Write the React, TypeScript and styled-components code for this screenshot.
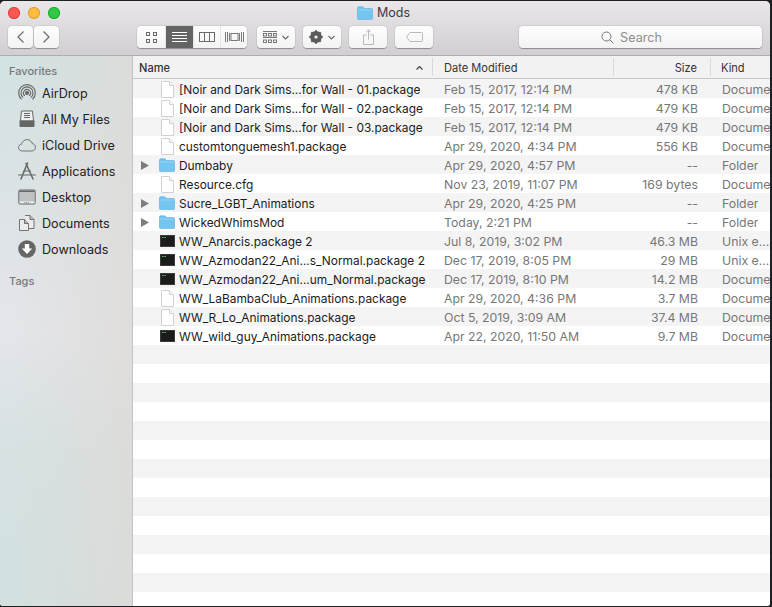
import React from 'react'
import styled, { createGlobalStyle } from 'styled-components'

const Global = createGlobalStyle`
  html, body {
    margin: 0;
    padding: 0;
    height: 100%;
    background: #1e2023;
    overflow: hidden;
  }
  * { box-sizing: border-box; }
`

const Win = styled.div`
  margin-top: 1px;
  width: 770px;
  height: 605px;
  border-radius: 5px 5px 3px 3px;
  overflow: hidden;
  display: flex;
  flex-direction: column;
  font-family: Inter, "Liberation Sans", sans-serif;
  background: #fff;
`

const Toolbar = styled.header`
  height: 55px;
  flex: none;
  display: flex;
  flex-direction: column;
  background: linear-gradient(#e9e7e9, #d1cfd1);
  border-bottom: 1px solid #aeacae;
`

const TitleRow = styled.div`
  height: 25px;
  flex: none;
  display: flex;
  align-items: center;
  padding: 0 0 2px 8px;
`

const Lights = styled.div`
  display: flex;
  gap: 8px;
  width: 349px;
`

const Light = styled.span<{ $c: string; $b: string }>`
  width: 12px;
  height: 12px;
  border-radius: 50%;
  background: ${p => p.$c};
  box-shadow: inset 0 0 0 1px ${p => p.$b};
`

const Title = styled.div`
  display: flex;
  align-items: center;
  gap: 4px;
  font-size: 12.5px;
  color: #3c3c3c;
`

const ControlRow = styled.div`
  display: flex;
  align-items: flex-start;
  padding-left: 8px;
`

const Btn = styled.div<{ $w: number; $ml?: number; $dim?: boolean }>`
  width: ${p => p.$w}px;
  height: 22px;
  margin-left: ${p => p.$ml ?? 0}px;
  display: flex;
  align-items: center;
  justify-content: center;
  gap: 5px;
  background: linear-gradient(#fdfdfd, #f3f3f3);
  border-radius: 4px;
  box-shadow: 0 0.5px 1px rgba(0, 0, 0, 0.3), 0 0 0 0.5px rgba(0, 0, 0, 0.08);
  color: ${p => (p.$dim ? '#b9b9b9' : '#6a6a6a')};
`

const Group = styled.div`
  display: flex;
  height: 22px;
  margin-left: 78px;
  border-radius: 4px;
  overflow: hidden;
  box-shadow: 0 0.5px 1px rgba(0, 0, 0, 0.3), 0 0 0 0.5px rgba(0, 0, 0, 0.08);
`

const Seg = styled.div<{ $w: number; $on?: boolean }>`
  width: ${p => p.$w}px;
  display: flex;
  align-items: center;
  justify-content: center;
  color: ${p => (p.$on ? '#fff' : '#6a6a6a')};
  background: ${p => (p.$on ? '#646464' : 'linear-gradient(#fdfdfd, #f3f3f3)')};
  & + & { border-left: 1px solid #e6e6e6; }
`

const SearchBox = styled(Btn)`
  color: #8e8e8e;
  font-size: 12.6px;
  gap: 6px;
  padding-right: 18px;
`

const Body = styled.div`
  flex: 1;
  min-height: 0;
  display: flex;
`

const Sidebar = styled.aside`
  width: 133px;
  flex: none;
  padding: 8px 0 0 0;
  background:
    linear-gradient(to right, rgba(226, 222, 218, 0) 10%, rgba(222, 218, 214, 0.7) 100%),
    linear-gradient(#d2e2e2 0%, #dde3e6 28%, #e4e6ea 50%, #d6e1e2 72%, #d2e0e0 100%);
  border-right: 1px solid #c3c3c3;
`

const SideHead = styled.div<{ $mt?: number }>`
  margin: ${p => p.$mt ?? 0}px 0 0 9px;
  height: 14px;
  line-height: 14px;
  font-size: 11px;
  font-weight: 500;
  color: #77797a;
`

const SideList = styled.div`
  margin-top: 2px;
`

const SideItem = styled.div`
  height: 26px;
  display: flex;
  align-items: center;
  padding-left: 18px;
  gap: 6px;
  font-size: 12.6px;
  color: #222;
`

const SideIcon = styled.svg`
  width: 18px;
  height: 18px;
  flex: none;
  color: #666;
`

const Main = styled.main`
  flex: 1;
  min-width: 0;
  display: flex;
  flex-direction: column;
  overflow: hidden;
`

const HeaderRow = styled.div`
  height: 23px;
  flex: none;
  display: flex;
  align-items: center;
  background: #f2f2f2;
  border-bottom: 1px solid #c6c6c6;
  font-size: 11.1px;
  color: #333;
`

const HeadCell = styled.div<{ $w: number; $right?: boolean; $pl: number; $pr?: number; $line?: boolean }>`
  width: ${p => p.$w}px;
  height: 18px;
  flex: none;
  display: flex;
  align-items: center;
  justify-content: ${p => (p.$right ? 'flex-end' : 'space-between')};
  padding: 1px ${p => p.$pr ?? 0}px 0 ${p => p.$pl}px;
  border-right: ${p => (p.$line ? '1px solid #d9d9d9' : 'none')};
`

const HeadName = styled.span`
  font-weight: 500;
`

const Rows = styled.div`
  flex: 1;
  overflow: hidden;
`

const Row = styled.div<{ $alt: boolean }>`
  height: 19px;
  padding-top: 1px;
  display: flex;
  align-items: center;
  font-size: 12.3px;
  background: ${p => (p.$alt ? '#f4f4f4' : '#fff')};
  white-space: nowrap;
`

const NameCell = styled.div`
  width: 300px;
  flex: none;
  display: flex;
  align-items: center;
  color: #1c1c1c;
  font-size: 11.9px;
`

const Caret = styled.span`
  width: 24px;
  flex: none;
  display: flex;
  justify-content: flex-end;
  padding-right: 8px;
  height: 9px;
`

const IconSlot = styled.span`
  width: 20px;
  margin-right: 2px;
  flex: none;
  display: flex;
  justify-content: center;
  align-items: center;
`

const DateCell = styled.div`
  width: 181px;
  flex: none;
  padding-left: 11px;
  color: #777;
`

const SizeCell = styled.div`
  width: 84px;
  flex: none;
  text-align: right;
  color: #777;
`

const KindCell = styled.div`
  padding-left: 24px;
  color: #777;
  overflow: hidden;
`

const Folder = ({ w = 16 }: { w?: number }) => (
  <svg width={w} height={(w * 14) / 16} viewBox="0 0 16 14">
    <path d="M0.5 2.2C0.5 1.3 1 .8 1.8.8h3.4c.7 0 1 .2 1.4.7l.8 1h7c.8 0 1.1.5 1.1 1.2v8.8c0 .7-.4 1.1-1.1 1.1H1.6C.9 13.600.5 13.200.5 12.500z" fill="#74c5f0" stroke="#57aadb" strokeWidth=".6" />
    <rect x="1" y="3.500" width="14" height="1" fill="#93d4f6" />
  </svg>
)

const Doc = () => (
  <svg width="13" height="17" viewBox="0 0 13 17">
    <path d="M.5.500h8l4 4v12H.5z" fill="#fff" stroke="#d2d2d2" />
    <path d="M8.500.500v4h4" fill="#f6f6f6" stroke="#d2d2d2" />
  </svg>
)

const Term = () => (
  <svg width="15" height="12" viewBox="0 0 15 12">
    <rect width="15" height="12" rx="1" fill="#111" />
    <rect x=".5" y=".5" width="14" height="11" rx="1" fill="#1c1c1c" stroke="#555" strokeWidth=".6" />
    <path d="M2 2.500h4" stroke="#5fd07a" strokeWidth="1" strokeDasharray="1 .6" />
  </svg>
)

const Tri = () => (
  <svg width="8" height="9" viewBox="0 0 8 9">
    <path d="M0 0l8 4.500L0 9z" fill="#7d7d7d" />
  </svg>
)

type Kind = 'doc' | 'folder' | 'term'

const files: { name: string; date: string; size: string; kind: string; type: Kind }[] = [
  { name: '[Noir and Dark Sims...for Wall - 01.package', date: 'Feb 15, 2017, 12:14 PM', size: '478 KB', kind: 'Document', type: 'doc' },
  { name: '[Noir and Dark Sims...for Wall - 02.package', date: 'Feb 15, 2017, 12:14 PM', size: '479 KB', kind: 'Document', type: 'doc' },
  { name: '[Noir and Dark Sims...for Wall - 03.package', date: 'Feb 15, 2017, 12:14 PM', size: '479 KB', kind: 'Document', type: 'doc' },
  { name: 'customtonguemesh1.package', date: 'Apr 29, 2020, 4:34 PM', size: '556 KB', kind: 'Document', type: 'doc' },
  { name: 'Dumbaby', date: 'Apr 29, 2020, 4:57 PM', size: '--', kind: 'Folder', type: 'folder' },
  { name: 'Resource.cfg', date: 'Nov 23, 2019, 11:07 PM', size: '169 bytes', kind: 'Document', type: 'doc' },
  { name: 'Sucre_LGBT_Animations', date: 'Apr 29, 2020, 4:25 PM', size: '--', kind: 'Folder', type: 'folder' },
  { name: 'WickedWhimsMod', date: 'Today, 2:21 PM', size: '--', kind: 'Folder', type: 'folder' },
  { name: 'WW_Anarcis.package 2', date: 'Jul 8, 2019, 3:02 PM', size: '46.3 MB', kind: 'Unix e...', type: 'term' },
  { name: 'WW_Azmodan22_Ani...s_Normal.package 2', date: 'Dec 17, 2019, 8:05 PM', size: '29 MB', kind: 'Unix e...', type: 'term' },
  { name: 'WW_Azmodan22_Ani...um_Normal.package', date: 'Dec 17, 2019, 8:10 PM', size: '14.2 MB', kind: 'Document', type: 'term' },
  { name: 'WW_LaBambaClub_Animations.package', date: 'Apr 29, 2020, 4:36 PM', size: '3.7 MB', kind: 'Document', type: 'doc' },
  { name: 'WW_R_Lo_Animations.package', date: 'Oct 5, 2019, 3:09 AM', size: '37.4 MB', kind: 'Document', type: 'doc' },
  { name: 'WW_wild_guy_Animations.package', date: 'Apr 22, 2020, 11:50 AM', size: '9.7 MB', kind: 'Document', type: 'term' },
]

const sideIcons: Record<string, React.ReactNode> = {
  AirDrop: (
    <g fill="none" stroke="currentColor" strokeWidth="1.100" strokeLinecap="round">
      <circle cx="9" cy="9" r="1.500" fill="currentColor" />
      <path d="M6.500 11.500a3.500 3.500 0 1 1 5 0" />
      <path d="M4.800 13.200a6 6 0 1 1 8.400 0" />
      <path d="M3.300 15a8.300 8.300 0 1 1 11.400 0" />
    </g>
  ),
  'All My Files': (
    <g>
      <path d="M3.500 1h11l1 10h-13z" fill="#fff" fillOpacity=".55" stroke="currentColor" />
      <path d="M6 3.500h6M6 5.500h6M6 7.500h6" stroke="currentColor" />
      <path d="M1.500 10.500h15v5.500a1 1 0 0 1-1 1h-13a1 1 0 0 1-1-1z" fill="currentColor" />
    </g>
  ),
  'iCloud Drive': (
    <path d="M4.500 15C2.300 15 .5 13.500.5 11.500c0-1.800 1.300-3.100 3-3.300C4 5.700 6.300 3.600 9.200 3.600c2.600 0 4.600 1.700 5.100 4 1.900.2 3.200 1.800 3.200 3.700 0 2-1.600 3.700-3.700 3.700z" fill="none" stroke="currentColor" strokeWidth=".9" />
  ),
  Applications: (
    <g fill="none" stroke="currentColor" strokeLinecap="round">
      <path d="M9.500 1L3 17" strokeWidth="1.500" />
      <path d="M8 1.500L15 17" strokeWidth="1.500" />
      <path d="M.5 13h17" strokeWidth="1" />
      <path d="M5.500 9h7" strokeWidth="1" />
    </g>
  ),
  Desktop: (
    <g>
      <rect x=".8" y="2" width="16.400" height="14" rx="1.200" fill="#fff" fillOpacity=".5" stroke="currentColor" />
      <rect x="1.300" y="2.500" width="15.400" height="1.500" fill="currentColor" />
      <rect x="1.300" y="4" width="15.400" height="9.500" fill="currentColor" fillOpacity=".35" />
      <path d="M6.500 14.800h5" stroke="currentColor" strokeWidth="1" strokeDasharray="1 .7" />
    </g>
  ),
  Documents: (
    <g fill="#ececec" stroke="currentColor" strokeWidth=".9">
      <path d="M7 1.500h5l4 4v9h-6" />
      <path d="M12 1.500v4h4" fill="#bbb" />
      <path d="M1.500 5.500h5l4 4v7h-9z" />
      <path d="M6.500 5.500v4h4" fill="#bbb" />
    </g>
  ),
  Downloads: (
    <g>
      <circle cx="9" cy="9" r="8.800" fill="currentColor" />
      <path d="M6.800 4h4.400v4.500h3L9 14 3.800 8.500h3z" fill="#fff" />
    </g>
  ),
}

function App() {
  const total = 28
  return (
    <>
      <Global />
      <Win>
        <Toolbar>
          <TitleRow>
            <Lights>
              <Light $c="#fc5753" $b="#e0443e" />
              <Light $c="#fdbc40" $b="#dea034" />
              <Light $c="#33c748" $b="#1dad2b" />
            </Lights>
            <Title>
              <Folder />
              Mods
            </Title>
          </TitleRow>
          <ControlRow>
            <Btn $w={25}>
              <svg width="9" height="14" viewBox="0 0 9 14"><path d="M7.500 1.500L2 7l5.500 5.500" fill="none" stroke="#6a6a6a" strokeWidth="1.200" /></svg>
            </Btn>
            <Btn $w={25} $ml={1}>
              <svg width="9" height="14" viewBox="0 0 9 14"><path d="M1.500 1.500L7 7l-5.500 5.500" fill="none" stroke="#6a6a6a" strokeWidth="1.200" /></svg>
            </Btn>
            <Group>
              <Seg $w={28}>
                <svg width="11" height="11" viewBox="0 0 11 11" fill="none" stroke="currentColor">
                  <rect x=".5" y=".5" width="3" height="3" />
                  <rect x="7.500" y=".5" width="3" height="3" />
                  <rect x=".5" y="7.500" width="3" height="3" />
                  <rect x="7.500" y="7.500" width="3" height="3" />
                </svg>
              </Seg>
              <Seg $w={28} $on>
                <svg width="15" height="10" viewBox="0 0 15 10" stroke="currentColor"><path d="M0 .5h15M0 3.500h15M0 6.500h15M0 9.500h15" /></svg>
              </Seg>
              <Seg $w={27}>
                <svg width="16" height="10" viewBox="0 0 16 10" fill="none" stroke="currentColor"><rect x=".5" y=".5" width="15" height="9" /><path d="M5.500 0v10M10.500 0v10" /></svg>
              </Seg>
              <Seg $w={27}>
                <svg width="19" height="10" viewBox="0 0 19 10" fill="none" stroke="currentColor" strokeWidth=".9"><rect x="6" y="1.500" width="7" height="7" /><path d="M.5 0v10M2.500 0v10M4.500 1v8M14.500 1v8M16.500 0v10M18.500 0v10" /></svg>
              </Seg>
            </Group>
            <Btn $w={38} $ml={10}>
              <svg width="14" height="13" viewBox="0 0 14 13" fill="none" stroke="currentColor" strokeWidth=".9">
                <path d="M0 .5h14M0 6.500h14" />
                <rect x=".5" y="2.500" width="3" height="2.500" /><rect x="5.500" y="2.500" width="3" height="2.500" /><rect x="10.500" y="2.500" width="3" height="2.500" />
                <rect x=".5" y="9" width="3" height="2.500" /><rect x="5.500" y="9" width="3" height="2.500" /><rect x="10.500" y="9" width="3" height="2.500" />
              </svg>
              <svg width="7" height="5" viewBox="0 0 7 5"><path d="M.5 1l3 3 3-3" fill="none" stroke="currentColor" strokeWidth="1.100" /></svg>
            </Btn>
            <Btn $w={38} $ml={8}>
              <svg width="14" height="14" viewBox="0 0 14 14">
                <circle cx="7" cy="7" r="4.300" fill="none" stroke="#5c5c5c" strokeWidth="3.200" />
                <path d="M7 .3v13.400M.3 7h13.400M2.300 2.300l9.400 9.400M11.700 2.300l-9.400 9.400" stroke="#5c5c5c" strokeWidth="2" />
                <circle cx="7" cy="7" r="1.600" fill="#f8f8f8" />
              </svg>
              <svg width="7" height="5" viewBox="0 0 7 5"><path d="M.5 1l3 3 3-3" fill="none" stroke="currentColor" strokeWidth="1.100" /></svg>
            </Btn>
            <Btn $w={38} $ml={8} $dim>
              <svg width="11" height="16" viewBox="0 0 11 16" fill="none" stroke="currentColor"><path d="M3.500 6H.5v9.500h10V6h-3M5.500 10.500V1M3 3.300L5.500 .9 8 3.300" /></svg>
            </Btn>
            <Btn $w={38} $ml={8} $dim>
              <svg width="17" height="10" viewBox="0 0 17 10" fill="none" stroke="currentColor"><path d="M4 .5h11.500a1 1 0 0 1 1 1v7a1 1 0 0 1-1 1H4L.5 5z" /></svg>
            </Btn>
            <SearchBox $w={243} $ml={86}>
              <svg width="13" height="13" viewBox="0 0 13 13" fill="none" stroke="#777"><circle cx="5.500" cy="5.500" r="4.500" /><path d="M9 9l3.500 3.500" /></svg>
              Search
            </SearchBox>
          </ControlRow>
        </Toolbar>
        <Body>
          <Sidebar>
            <SideHead>Favorites</SideHead>
            <SideList>
              {Object.keys(sideIcons).map(label => (
                <SideItem key={label}>
                  <SideIcon viewBox="0 0 18 18">{sideIcons[label]}</SideIcon>
                  {label}
                </SideItem>
              ))}
            </SideList>
            <SideHead $mt={12}>Tags</SideHead>
          </Sidebar>
          <Main>
            <HeaderRow>
              <HeadCell $w={300} $pl={6} $pr={9} $line>
                <HeadName>Name</HeadName>
                <svg width="7" height="4" viewBox="0 0 7 4"><path d="M.5 3.500l3-3 3 3" fill="none" stroke="#444" strokeWidth="1.200" /></svg>
              </HeadCell>
              <HeadCell $w={181} $pl={11} $line>Date Modified</HeadCell>
              <HeadCell $w={97} $pl={0} $pr={13} $right $line>Size</HeadCell>
              <HeadCell $w={50} $pl={10}>Kind</HeadCell>
            </HeaderRow>
            <Rows>
              {Array.from({ length: total }, (_, i) => {
                const f = files[i]
                return (
                  <Row key={i} $alt={i % 2 === 0}>
                    {f && (
                      <>
                        <NameCell>
                          <Caret>{f.type === 'folder' && <Tri />}</Caret>
                          <IconSlot>
                            {f.type === 'doc' && <Doc />}
                            {f.type === 'folder' && <Folder />}
                            {f.type === 'term' && <Term />}
                          </IconSlot>
                          <span>{f.name}</span>
                        </NameCell>
                        <DateCell>{f.date}</DateCell>
                        <SizeCell>{f.size}</SizeCell>
                        <KindCell>{f.kind}</KindCell>
                      </>
                    )}
                  </Row>
                )
              })}
            </Rows>
          </Main>
        </Body>
      </Win>
    </>
  )
}

export default App
